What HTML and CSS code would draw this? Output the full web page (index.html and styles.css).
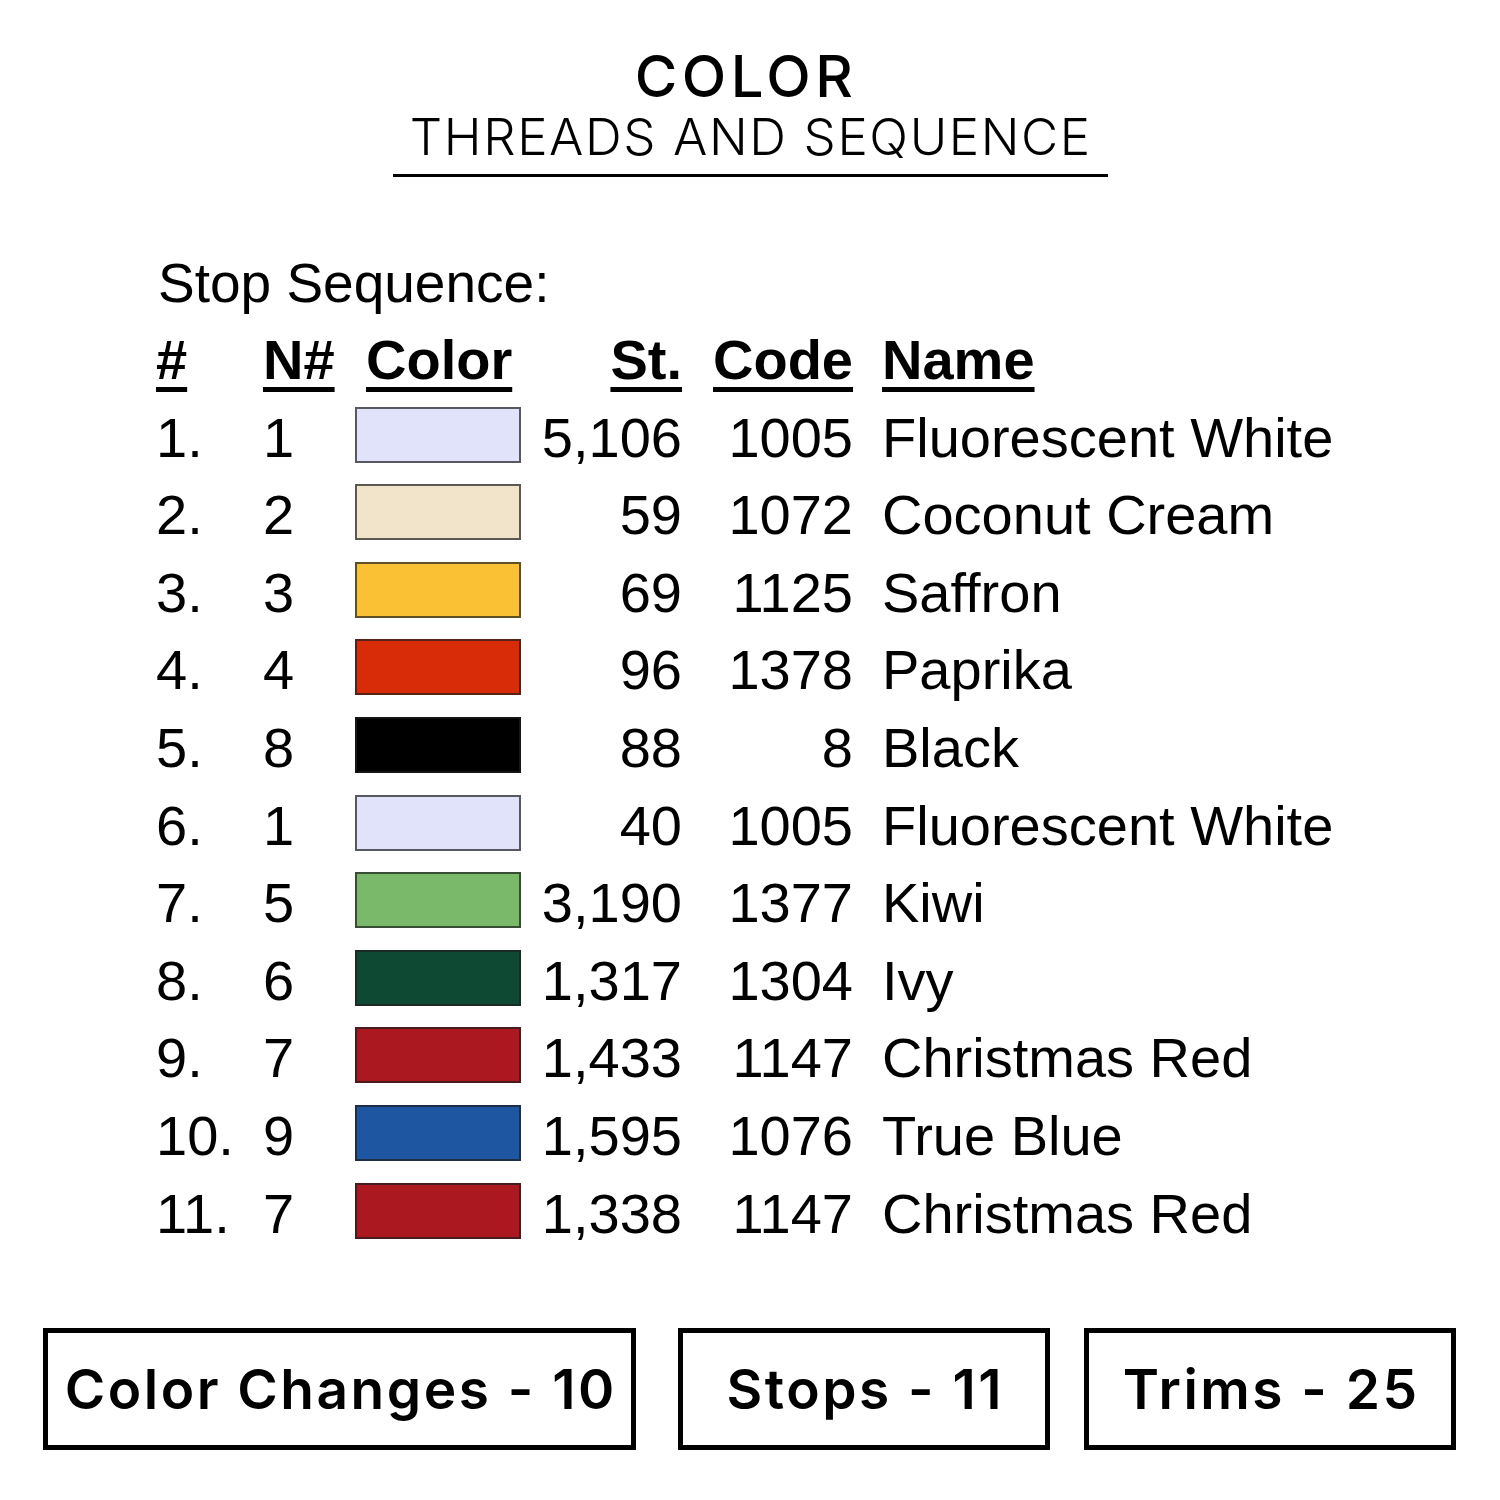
FILE: index.html
```html
<!DOCTYPE html>
<html lang="en">
<head>
<meta charset="utf-8">
<title>Color Threads and Sequence</title>
<link rel="stylesheet" href="styles.css">
</head>
<body>
<div class="page">
  <header class="title">
    <div class="title-main">COLOR</div>
    <div class="title-sub">THREADS AND SEQUENCE</div>
  </header>

  <section class="sequence">
    <div class="seq-label">Stop Sequence:</div>
    <div class="seq-table">
      <div class="th c-num"><u>#</u></div>
      <div class="th c-n"><u>N#</u></div>
      <div class="th c-color"><u>Color</u></div>
      <div class="th c-st"><u>St.</u></div>
      <div class="th c-code"><u>Code</u></div>
      <div class="th c-name"><u>Name</u></div>

      <div class="c-num">1.</div><div class="c-n">1</div><div class="c-color"><span class="swatch sw-white"></span></div><div class="c-st">5,106</div><div class="c-code">1005</div><div class="c-name">Fluorescent White</div>
      <div class="c-num">2.</div><div class="c-n">2</div><div class="c-color"><span class="swatch sw-cream"></span></div><div class="c-st">59</div><div class="c-code">1072</div><div class="c-name">Coconut Cream</div>
      <div class="c-num">3.</div><div class="c-n">3</div><div class="c-color"><span class="swatch sw-saffron"></span></div><div class="c-st">69</div><div class="c-code">1125</div><div class="c-name">Saffron</div>
      <div class="c-num">4.</div><div class="c-n">4</div><div class="c-color"><span class="swatch sw-paprika"></span></div><div class="c-st">96</div><div class="c-code">1378</div><div class="c-name">Paprika</div>
      <div class="c-num">5.</div><div class="c-n">8</div><div class="c-color"><span class="swatch sw-black"></span></div><div class="c-st">88</div><div class="c-code">8</div><div class="c-name">Black</div>
      <div class="c-num">6.</div><div class="c-n">1</div><div class="c-color"><span class="swatch sw-white"></span></div><div class="c-st">40</div><div class="c-code">1005</div><div class="c-name">Fluorescent White</div>
      <div class="c-num">7.</div><div class="c-n">5</div><div class="c-color"><span class="swatch sw-kiwi"></span></div><div class="c-st">3,190</div><div class="c-code">1377</div><div class="c-name">Kiwi</div>
      <div class="c-num">8.</div><div class="c-n">6</div><div class="c-color"><span class="swatch sw-ivy"></span></div><div class="c-st">1,317</div><div class="c-code">1304</div><div class="c-name">Ivy</div>
      <div class="c-num">9.</div><div class="c-n">7</div><div class="c-color"><span class="swatch sw-red"></span></div><div class="c-st">1,433</div><div class="c-code">1147</div><div class="c-name">Christmas Red</div>
      <div class="c-num">10.</div><div class="c-n">9</div><div class="c-color"><span class="swatch sw-blue"></span></div><div class="c-st">1,595</div><div class="c-code">1076</div><div class="c-name">True Blue</div>
      <div class="c-num">11.</div><div class="c-n">7</div><div class="c-color"><span class="swatch sw-red"></span></div><div class="c-st">1,338</div><div class="c-code">1147</div><div class="c-name">Christmas Red</div>
    </div>
  </section>

  <footer class="stats">
    <div class="stat stat-wide">Color Changes - 10</div>
    <div class="stat stat-mid">Stops - 11</div>
    <div class="stat stat-last">Trims - 25</div>
  </footer>
</div>
</body>
</html>
```

FILE: styles.css
```css
html, body {
  margin: 0;
  padding: 0;
  background: #ffffff;
}

.page {
  width: 1500px;
  height: 1500px;
  color: #000;
  overflow: hidden;
}

.title {
  padding-top: 43px;
  text-align: center;
  font-family: "Inter", "Noto Sans", sans-serif;
}

.title-main {
  font-size: 58px;
  font-weight: 500;
  line-height: 66px;
  letter-spacing: 4.5px;
  margin-left: -8px;
}

.title-sub {
  width: 715px;
  margin: 0 auto;
  font-size: 51px;
  font-weight: 300;
  line-height: 56px;
  letter-spacing: 1.6px;
  text-indent: 1.6px;
  padding-bottom: 9px;
  border-bottom: 3px solid #000;
}

.sequence {
  padding-left: 156px;
  padding-top: 73px;
  font-family: "Liberation Sans", Arial, sans-serif;
}

.seq-label {
  font-size: 55px;
  line-height: 66px;
  padding-left: 2px;
  margin-bottom: 5px;
}

.seq-table {
  display: grid;
  grid-template-columns: 107px 92px 166px 161px 171px auto;
  grid-auto-rows: 77.6px;
  font-size: 56px;
  line-height: 77.6px;
  white-space: nowrap;
}

.th {
  font-weight: bold;
}

.th u {
  text-decoration-thickness: 5px;
  text-underline-offset: 8px;
}

.c-st, .c-code {
  text-align: right;
}

.c-name {
  padding-left: 29px;
}

.th.c-color {
  padding-left: 11px;
}

.swatch {
  display: block;
  box-sizing: border-box;
  width: 166px;
  height: 56px;
  margin-top: 8px;
  border: 2px solid rgba(30, 30, 30, 0.7);
}

.sw-white   { background: #e1e3fb; }
.sw-cream   { background: #f2e3cb; }
.sw-saffron { background: #f9c133; }
.sw-paprika { background: #d72c07; }
.sw-black   { background: #000000; }
.sw-kiwi    { background: #7bb96a; }
.sw-ivy     { background: #0e4a33; }
.sw-red     { background: #ab1820; }
.sw-blue    { background: #1e56a2; }

.stats {
  display: flex;
  margin-top: 76px;
  padding-left: 43px;
  font-family: "Inter", "Noto Sans", sans-serif;
}

.stat {
  box-sizing: border-box;
  height: 122px;
  border: 5px solid #000;
  display: flex;
  align-items: center;
  justify-content: center;
  padding-left: 2.5px;
  font-size: 55px;
  font-weight: 600;
  letter-spacing: 2.5px;
  white-space: nowrap;
}

.stat-wide { width: 593px; }
.stat-mid  { width: 372px; margin-left: 42px; }
.stat-last { width: 372px; margin-left: 34px; }
```
